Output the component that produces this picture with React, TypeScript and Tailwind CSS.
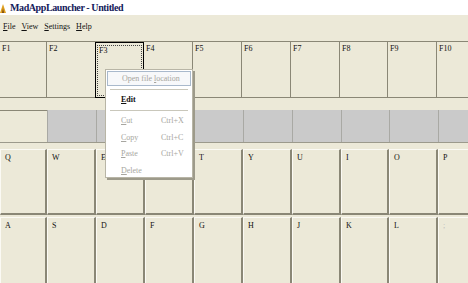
import React from 'react';

const W: Record<number, string> = {
  47: 'w-[47px]',
  48: 'w-[48px]',
  49: 'w-[49px]',
};

const COLS = [47, 49, 49, 49, 49, 49, 49, 48, 49, 49];

const fKeys = ['F1', 'F2', 'F3', 'F4', 'F5', 'F6', 'F7', 'F8', 'F9', 'F10'];
const qKeys = ['Q', 'W', 'E', 'R', 'T', 'Y', 'U', 'I', 'O', 'P'];
const aKeys = ['A', 'S', 'D', 'F', 'G', 'H', 'J', 'K', 'L', ';'];

function Menu({ label }: { label: string }) {
  return (
    <span>
      <span className="underline">{label[0]}</span>
      {label.slice(1)}
    </span>
  );
}

function KeyRow({ keys, tall }: { keys: string[]; tall: string }) {
  return (
    <div className={`flex shrink-0 ${tall}`}>
      {keys.map((k, i) => (
        <div
          key={k}
          className={`${W[COLS[i]]} shrink-0 border-t border-l border-t-[#fbfaf4] border-l-[#fbfaf4] border-r-2 border-b-2 border-r-[#8a8776] border-b-[#8a8776] bg-[#ece9d8] pl-[4px] pt-[4px] leading-none text-[#111] ${
            k === ';' ? 'text-[#bbb]' : ''
          }`}
        >
          {k}
        </div>
      ))}
    </div>
  );
}

export default function App() {
  return (
    <div className="relative w-[468px] h-[283px] overflow-hidden bg-[#ece9d8] text-[8px] [font-family:'Liberation_Serif',serif]">
      {/* title bar */}
      <div className="flex items-center h-[15px] bg-white gap-[3px]">
        <svg width="7" height="10" viewBox="0 0 7 10" className="shrink-0">
          <path d="M0 10 L3 1 L6 10 Z" fill="#e0a020" />
          <path d="M2 10 L3 5 L4 10 Z" fill="#7a4a10" />
        </svg>
        <span className="text-[10px] font-bold text-[#14205a] tracking-[-0.4px]">MadAppLauncher - Untitled</span>
      </div>

      {/* menu bar */}
      <div className="flex h-[26px] items-start pt-[6px] pl-[3px] gap-[6px] text-[#111]">
        <Menu label="File" />
        <Menu label="View" />
        <Menu label="Settings" />
        <Menu label="Help" />
      </div>

      {/* F row */}
      <div className="flex h-[57px] border-t border-[#8a8776]">
        {fKeys.map((k, i) => (
          <div
            key={k}
            className={`${W[COLS[i]]} shrink-0 border-r border-b border-[#8a8776] px-[2px] pt-[3px] leading-none text-[#111] ${
              k === 'F3' ? 'border border-black -ml-px' : ''
            }`}
          >
            {k === 'F3' ? (
              <div className="h-full border border-dotted border-[#444] -mx-px -mt-px px-px pt-px">F3</div>
            ) : (
              k
            )}
          </div>
        ))}
      </div>

      <div className="h-[12px]" />

      {/* tab band */}
      <div className="flex h-[33px] border-b border-[#9c9a8c]">
        <div className="w-[47px] shrink-0 border-t border-[#8a8776] bg-[#ece9d8]" />
        {COLS.slice(1).map((w, i) => (
          <div
            key={i}
            className={`${W[w]} shrink-0 border-l border-[#a9a9a4] bg-[#cacaca]`}
          />
        ))}
      </div>

      <div className="h-[6px]" />

      <KeyRow keys={qKeys} tall="h-[66px]" />
      <div className="h-[2px]" />
      <KeyRow keys={aKeys} tall="h-[70px]" />

      {/* context menu */}
      <div className="absolute left-[105px] top-[69px] w-[88px] h-[109px] bg-white border border-[#b8b5a6] shadow-[2px_2px_0_#9d9a8a] text-[#a7a6a0]">
        <div className="mx-[1px] mt-[1px] h-[15px] border border-[#a9b9cc] bg-[#f7f8fa] pl-[14px] pt-[3px] leading-none">
          Open file <span className="underline">l</span>ocation
        </div>
        <div className="mx-[4px] mt-[3px] border-t border-[#c9c7bb]" />
        <div className="pl-[15px] pt-[6px] h-[20px] leading-none font-bold text-[#111]">
          <Menu label="Edit" />
        </div>
        <div className="mx-[4px] border-t border-[#c9c7bb]" />
        {[
          ['Cut', 'Ctrl+X'],
          ['Copy', 'Ctrl+C'],
          ['Paste', 'Ctrl+V'],
          ['Delete', ''],
        ].map(([l, s]) => (
          <div key={l} className="flex h-[16.5px] pt-[6px] pl-[15px] leading-none">
            <span className="w-[40px]">
              <span className="underline">{l[0]}</span>
              {l.slice(1)}
            </span>
            <span>{s}</span>
          </div>
        ))}
      </div>
    </div>
  );
}
